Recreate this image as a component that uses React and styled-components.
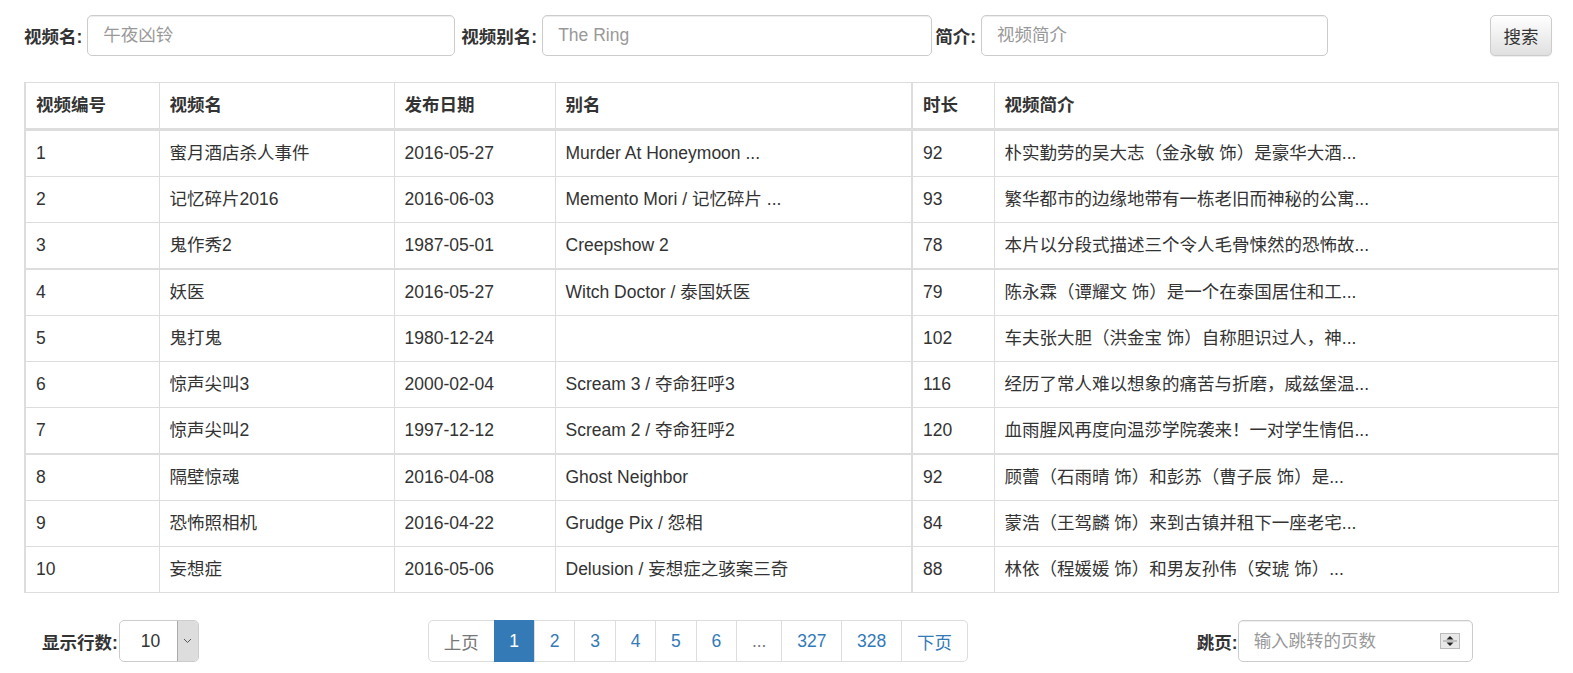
import React from "react";
import styled, { createGlobalStyle } from "styled-components";

const GlobalStyle = createGlobalStyle`
  html, body { margin: 0; padding: 0; background: #fff; }
  body {
    font-family: "Liberation Sans", "Noto Sans CJK SC", sans-serif;
    font-size: 17.5px;
    color: #333;
  }
  * { box-sizing: border-box; }
`;

const Page = styled.div`
  padding: 15px 16px 0 24px;
`;

const SearchBar = styled.div`
  display: flex;
  align-items: center;
  height: 41px;
`;

const Label = styled.label`
  font-weight: bold;
  font-size: 17.5px;
  color: #333;
  white-space: nowrap;
  margin-left: ${(p) => p.$ml || 0}px;
  margin-right: ${(p) => (p.$mr === undefined ? 5 : p.$mr)}px;
`;

const TextInput = styled.input`
  width: ${(p) => p.$w}px;
  height: 41px;
  padding: 7px 15px;
  border: 1px solid #ccc;
  border-radius: 5px;
  font-family: inherit;
  font-size: 17.5px;
  color: #555;
  box-shadow: inset 0 1px 1px rgba(0, 0, 0, 0.075);
  outline: none;
  &::placeholder { color: #999; }
`;

const Spacer = styled.div`
  flex: 1;
`;

const Button = styled.button`
  height: 41px;
  width: 62px;
  padding: 0;
  border: 1px solid #ccc;
  border-radius: 5px;
  background-image: linear-gradient(to bottom, #fff 0, #e0e0e0 100%);
  box-shadow: inset 0 1px 0 rgba(255, 255, 255, 0.15), 0 1px 1px rgba(0, 0, 0, 0.075);
  font-family: inherit;
  font-size: 17.5px;
  color: #333;
  margin-right: 5px;
`;

const Table = styled.table`
  margin-top: 26px;
  width: 1533px;
  table-layout: fixed;
  border-collapse: collapse;
  border: 1px solid #ddd;
  border-left-width: 2px;
`;

const Th = styled.th`
  text-align: left;
  font-weight: bold;
  padding: 10px 10px;
  line-height: 25px;
  height: 47px;
  border: 1px solid #ddd;
  border-bottom: 3px solid #ddd;
  border-right-width: ${(p) => (p.$thick ? 2 : 1)}px;
  white-space: nowrap;
`;

const Td = styled.td`
  padding: 10px 10px;
  line-height: 25px;
  border: 1px solid #ddd;
  border-right-width: ${(p) => (p.$thick ? 2 : 1)}px;
  white-space: nowrap;
  overflow: hidden;
`;

const Tr = styled.tr`
  border-bottom: ${(p) => (p.$thick ? 2 : 1)}px solid #ddd;
`;

const Footer = styled.div`
  display: flex;
  align-items: center;
  margin-top: 27px;
  padding-left: 18px;
`;

const SelectBox = styled.div`
  display: flex;
  width: 80px;
  height: 42px;
  border: 1px solid #ccc;
  border-radius: 5px;
  overflow: hidden;
  margin-left: 1px;
`;

const SelectValue = styled.div`
  flex: 1;
  display: flex;
  align-items: center;
  padding-left: 21px;
  font-size: 17.5px;
  color: #333;
`;

const SelectArrow = styled.div`
  width: 21px;
  background: #ddd;
  border-left: 1px solid #aaa;
  display: flex;
  align-items: center;
  justify-content: center;
`;

const Pagination = styled.ul`
  display: flex;
  list-style: none;
  margin: 0 0 0 229px;
  padding: 0;
  height: 42px;
`;

const PageItem = styled.li`
  height: 42px;
  padding: 0 14.85px;
  display: flex;
  align-items: center;
  justify-content: center;
  border: 1px solid #ddd;
  margin-left: -1px;
  font-size: 17.5px;
  color: ${(p) => (p.$active ? "#fff" : p.$muted ? "#777" : "#337ab7")};
  background: ${(p) => (p.$active ? "#337ab7" : "#fff")};
  border-color: ${(p) => (p.$active ? "#337ab7" : "#ddd")};
  &:first-child { border-radius: 5px 0 0 5px; margin-left: 0; }
  &:last-child { border-radius: 0 5px 5px 0; }
`;

const JumpGroup = styled.div`
  display: flex;
  align-items: center;
  margin-left: 229px;
`;

const JumpBox = styled.div`
  display: flex;
  align-items: center;
  width: 235px;
  height: 42px;
  border: 1px solid #ccc;
  border-radius: 5px;
  padding: 0 12px 0 15px;
  box-shadow: inset 0 1px 1px rgba(0, 0, 0, 0.075);
`;

const JumpInput = styled.input`
  flex: 1;
  min-width: 0;
  border: none;
  outline: none;
  font-family: inherit;
  font-size: 17.5px;
  color: #555;
  padding: 0;
  &::placeholder { color: #999; }
`;

const Spinner = () => (
  <svg width="20" height="16" viewBox="0 0 20 16">
    <rect x="0.5" y="0.5" width="19" height="15" fill="#e8e8e8" stroke="#bbb" />
    <line x1="3" y1="8" x2="17" y2="8" stroke="#999" />
    <polygon points="10,3 13.5,6.5 6.5,6.5" fill="#222" />
    <polygon points="10,13 13.5,9.5 6.5,9.5" fill="#222" />
  </svg>
);

const Chevron = () => (
  <svg width="9" height="6" viewBox="0 0 9 6">
    <polyline points="1,1 4.5,4.5 8,1" fill="none" stroke="#555" strokeWidth="1" />
  </svg>
);

const columns = [
  { title: "视频编号", w: 134 },
  { title: "视频名", w: 235 },
  { title: "发布日期", w: 161 },
  { title: "别名", w: 357, thick: true },
  { title: "时长", w: 82 },
  { title: "视频简介", w: 564 },
];

const rows = [
  ["1", "蜜月酒店杀人事件", "2016-05-27", "Murder At Honeymoon ...", "92", "朴实勤劳的吴大志（金永敏 饰）是豪华大酒..."],
  ["2", "记忆碎片2016", "2016-06-03", "Memento Mori / 记忆碎片 ...", "93", "繁华都市的边缘地带有一栋老旧而神秘的公寓..."],
  ["3", "鬼作秀2", "1987-05-01", "Creepshow 2", "78", "本片以分段式描述三个令人毛骨悚然的恐怖故..."],
  ["4", "妖医", "2016-05-27", "Witch Doctor / 泰国妖医", "79", "陈永霖（谭耀文 饰）是一个在泰国居住和工..."],
  ["5", "鬼打鬼", "1980-12-24", "", "102", "车夫张大胆（洪金宝 饰）自称胆识过人，神..."],
  ["6", "惊声尖叫3", "2000-02-04", "Scream 3 / 夺命狂呼3", "116", "经历了常人难以想象的痛苦与折磨，威兹堡温..."],
  ["7", "惊声尖叫2", "1997-12-12", "Scream 2 / 夺命狂呼2", "120", "血雨腥风再度向温莎学院袭来！一对学生情侣..."],
  ["8", "隔壁惊魂", "2016-04-08", "Ghost Neighbor", "92", "顾蕾（石雨晴 饰）和彭苏（曹子辰 饰）是..."],
  ["9", "恐怖照相机", "2016-04-22", "Grudge Pix / 怨相", "84", "蒙浩（王驾麟 饰）来到古镇并租下一座老宅..."],
  ["10", "妄想症", "2016-05-06", "Delusion / 妄想症之骇案三奇", "88", "林依（程媛媛 饰）和男友孙伟（安琥 饰）..."],
];

const pages = [
  { t: "上页", muted: true },
  { t: "1", active: true },
  { t: "2" },
  { t: "3" },
  { t: "4" },
  { t: "5" },
  { t: "6" },
  { t: "...", muted: true },
  { t: "327" },
  { t: "328" },
  { t: "下页" },
];

export default function App() {
  return (
    <Page>
      <GlobalStyle />
      <SearchBar>
        <Label>视频名:</Label>
        <TextInput $w={368} placeholder="午夜凶铃" />
        <Label $ml={6}>视频别名:</Label>
        <TextInput $w={390} placeholder="The Ring" />
        <Label $ml={3}>简介:</Label>
        <TextInput $w={347} placeholder="视频简介" />
        <Spacer />
        <Button>搜索</Button>
      </SearchBar>

      <Table>
        <colgroup>
          {columns.map((c) => (
            <col key={c.title} style={{ width: c.w }} />
          ))}
        </colgroup>
        <thead>
          <tr>
            {columns.map((c) => (
              <Th key={c.title} $thick={c.thick}>
                {c.title}
              </Th>
            ))}
          </tr>
        </thead>
        <tbody>
          {rows.map((r, i) => (
            <Tr key={r[0]} $thick={i === 2 || i === 6}>
              {r.map((cell, j) => (
                <Td key={j} $thick={columns[j].thick}>
                  {cell}
                </Td>
              ))}
            </Tr>
          ))}
        </tbody>
      </Table>

      <Footer>
        <Label $mr={0}>显示行数:</Label>
        <SelectBox>
          <SelectValue>10</SelectValue>
          <SelectArrow>
            <Chevron />
          </SelectArrow>
        </SelectBox>
        <Pagination>
          {pages.map((p) => (
            <PageItem key={p.t} $active={p.active} $muted={p.muted}>
              {p.t}
            </PageItem>
          ))}
        </Pagination>
        <JumpGroup>
          <Label $mr={0}>跳页:</Label>
          <JumpBox>
            <JumpInput placeholder="输入跳转的页数" />
            <Spinner />
          </JumpBox>
        </JumpGroup>
      </Footer>
    </Page>
  );
}
